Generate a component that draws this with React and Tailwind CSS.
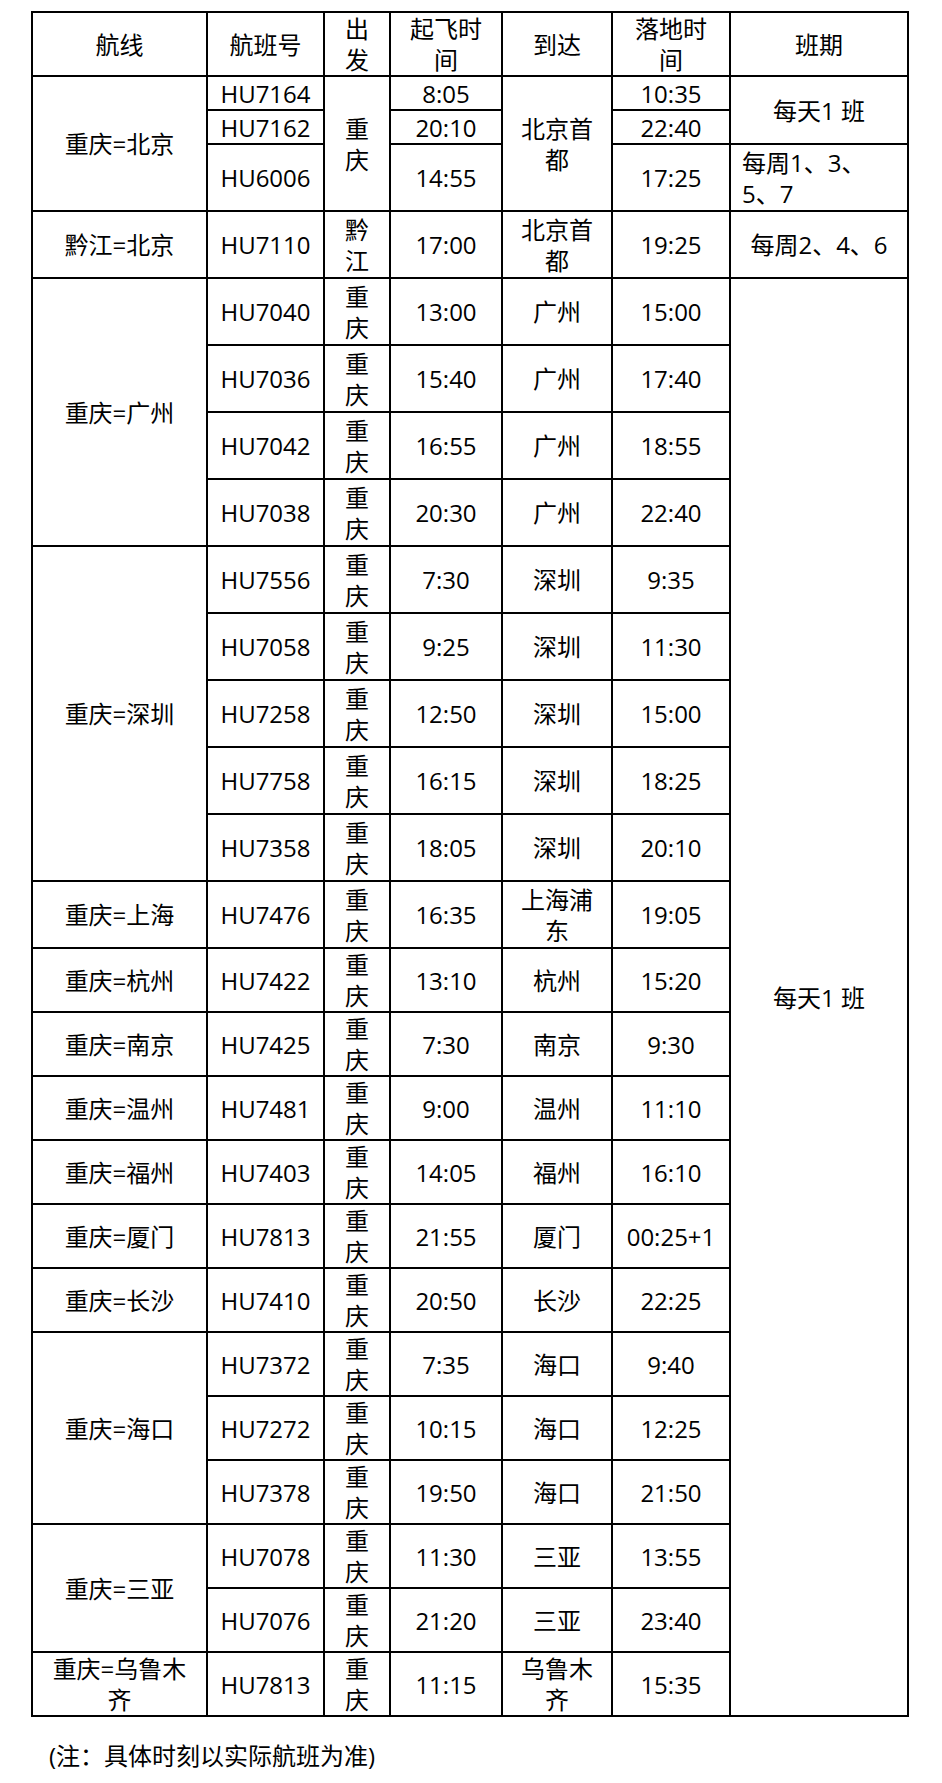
const cell = "border-2 border-black px-[10px] py-0 text-center align-middle whitespace-pre-line"

const head = ["航线", "航班号", "出\n发", "起飞时\n间", "到达", "落地时\n间", "班期"]

// [route, flight, depart time, arrive city, land time]
const guangzhou = [
  ["HU7040", "13:00", "广州", "15:00"],
  ["HU7036", "15:40", "广州", "17:40"],
  ["HU7042", "16:55", "广州", "18:55"],
  ["HU7038", "20:30", "广州", "22:40"],
]

const shenzhen = [
  ["HU7556", "7:30", "深圳", "9:35"],
  ["HU7058", "9:25", "深圳", "11:30"],
  ["HU7258", "12:50", "深圳", "15:00"],
  ["HU7758", "16:15", "深圳", "18:25"],
  ["HU7358", "18:05", "深圳", "20:10"],
]

const singles = [
  ["重庆=杭州", "HU7422", "13:10", "杭州", "15:20"],
  ["重庆=南京", "HU7425", "7:30", "南京", "9:30"],
  ["重庆=温州", "HU7481", "9:00", "温州", "11:10"],
  ["重庆=福州", "HU7403", "14:05", "福州", "16:10"],
  ["重庆=厦门", "HU7813", "21:55", "厦门", "00:25+1"],
  ["重庆=长沙", "HU7410", "20:50", "长沙", "22:25"],
]

const haikou = [
  ["HU7372", "7:35", "海口", "9:40"],
  ["HU7272", "10:15", "海口", "12:25"],
  ["HU7378", "19:50", "海口", "21:50"],
]

const sanya = [
  ["HU7078", "11:30", "三亚", "13:55"],
  ["HU7076", "21:20", "三亚", "23:40"],
]

function Cells({ row }) {
  return (
    <>
      <td className={cell}>{row[0]}</td>
      <td className={cell}>{"重\n庆"}</td>
      <td className={cell}>{row[1]}</td>
      <td className={cell}>{row[2]}</td>
      <td className={cell}>{row[3]}</td>
    </>
  )
}

function Group({ route, rows, h, children }) {
  return rows.map((row, i) => (
    <tr key={row[0] + i} className={h}>
      {i === 0 && (
        <td rowSpan={rows.length} className={cell}>
          {route}
        </td>
      )}
      <Cells row={row} />
      {i === 0 && children}
    </tr>
  ))
}

export default function App() {
  return (
    <div className="min-h-[1783px] bg-white pl-[31px] pt-[11px] text-[24px] leading-[31px] text-black font-['Open_Sans','Noto_Sans_CJK_SC',sans-serif]">
      <table className="table-fixed border-collapse">
        <colgroup>
          <col className="w-[175px]" />
          <col className="w-[117px]" />
          <col className="w-[66px]" />
          <col className="w-[112px]" />
          <col className="w-[110px]" />
          <col className="w-[118px]" />
          <col className="w-[178px]" />
        </colgroup>
        <thead>
          <tr className="h-[63px]">
            {head.map((t) => (
              <th key={t} className={cell + " font-normal"}>
                {t}
              </th>
            ))}
          </tr>
        </thead>
        <tbody>
          {/* 重庆=北京 */}
          <tr className="h-[34px]">
            <td rowSpan={3} className={cell}>重庆=北京</td>
            <td className={cell}>HU7164</td>
            <td rowSpan={3} className={cell}>{"重\n庆"}</td>
            <td className={cell}>8:05</td>
            <td rowSpan={3} className={cell}>{"北京首\n都"}</td>
            <td className={cell}>10:35</td>
            <td rowSpan={2} className={cell}>每天1 班</td>
          </tr>
          <tr className="h-[34px]">
            <td className={cell}>HU7162</td>
            <td className={cell}>20:10</td>
            <td className={cell}>22:40</td>
          </tr>
          <tr className="h-[67px]">
            <td className={cell}>HU6006</td>
            <td className={cell}>14:55</td>
            <td className={cell}>17:25</td>
            <td className="border-2 border-black pl-[11px] pr-[8px] text-left align-middle whitespace-pre-line">
              {"每周1、3、\n5、7"}
            </td>
          </tr>

          <tr className="h-[67px]">
            <td className={cell}>黔江=北京</td>
            <td className={cell}>HU7110</td>
            <td className={cell}>{"黔\n江"}</td>
            <td className={cell}>17:00</td>
            <td className={cell}>{"北京首\n都"}</td>
            <td className={cell}>19:25</td>
            <td className={cell}>每周2、4、6</td>
          </tr>

          <Group route="重庆=广州" rows={guangzhou} h="h-[67px]">
            <td rowSpan={22} className={cell}>每天1 班</td>
          </Group>
          <Group route="重庆=深圳" rows={shenzhen} h="h-[67px]" />

          <tr className="h-[67px]">
            <td className={cell}>重庆=上海</td>
            <Cells row={["HU7476", "16:35", "上海浦\n东", "19:05"]} />
          </tr>

          {singles.map((r) => (
            <tr key={r[0]} className="h-[64px]">
              <td className={cell}>{r[0]}</td>
              <Cells row={r.slice(1)} />
            </tr>
          ))}

          <Group route="重庆=海口" rows={haikou} h="h-[64px]" />
          <Group route="重庆=三亚" rows={sanya} h="h-[64px]" />

          <tr className="h-[64px]">
            <td className={cell}>{"重庆=乌鲁木\n齐"}</td>
            <Cells row={["HU7813", "11:15", "乌鲁木\n齐", "15:35"]} />
          </tr>
        </tbody>
      </table>

      <p className="mt-[23px] pl-[18px]">(注：具体时刻以实际航班为准)</p>
    </div>
  )
}
